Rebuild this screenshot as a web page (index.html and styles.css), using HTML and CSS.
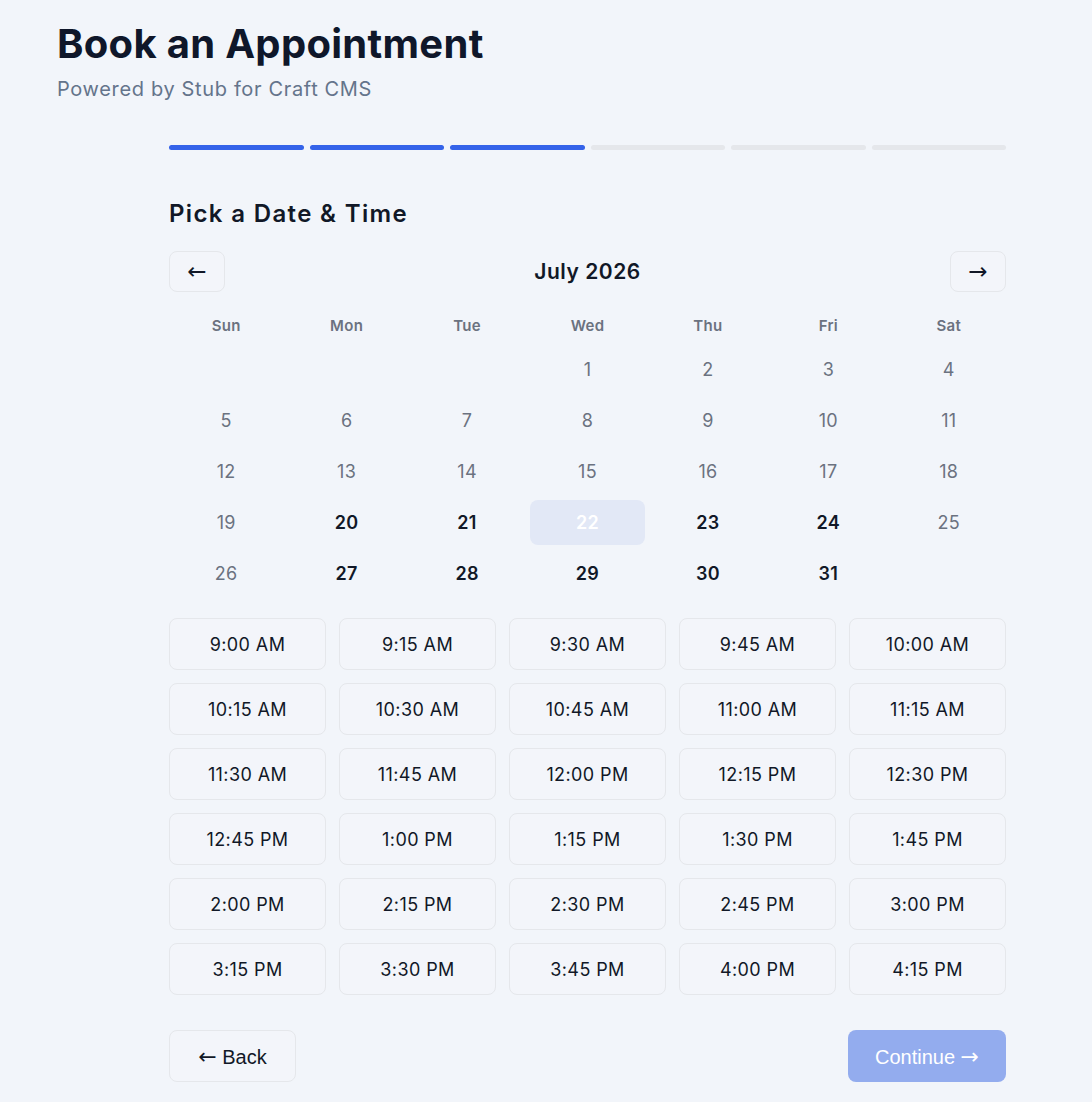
FILE: index.html
```html
<!DOCTYPE html>
<html>
<head>
<meta charset="utf-8">
<link rel="stylesheet" href="styles.css">
</head>
<body>
<div class="page">
  <header class="header">
    <h1 class="title">Book an Appointment</h1>
    <p class="subtitle">Powered by Stub for Craft CMS</p>
  </header>
  <main class="form">
    <div class="progress">
      <span class="seg on"></span><span class="seg on"></span><span class="seg on"></span>
      <span class="seg"></span><span class="seg"></span><span class="seg"></span>
    </div>
    <h2 class="step-title">Pick a Date &amp; Time</h2>
    <div class="cal-nav">
      <button class="nav-btn"><span class="arrow">&larr;</span></button>
      <div class="month">July 2026</div>
      <button class="nav-btn"><span class="arrow">&rarr;</span></button>
    </div>
    <div class="cal">
      <div class="dow">Sun</div><div class="dow">Mon</div><div class="dow">Tue</div><div class="dow">Wed</div><div class="dow">Thu</div><div class="dow">Fri</div><div class="dow">Sat</div>
      <div class="day"></div><div class="day"></div><div class="day"></div>
      <div class="day off">1</div><div class="day off">2</div><div class="day off">3</div><div class="day off">4</div>
      <div class="day off">5</div><div class="day off">6</div><div class="day off">7</div><div class="day off">8</div><div class="day off">9</div><div class="day off">10</div><div class="day off">11</div>
      <div class="day off">12</div><div class="day off">13</div><div class="day off">14</div><div class="day off">15</div><div class="day off">16</div><div class="day off">17</div><div class="day off">18</div>
      <div class="day off">19</div><div class="day on">20</div><div class="day on">21</div><div class="day sel">22</div><div class="day on">23</div><div class="day on">24</div><div class="day off">25</div>
      <div class="day off">26</div><div class="day on">27</div><div class="day on">28</div><div class="day on">29</div><div class="day on">30</div><div class="day on">31</div><div class="day"></div>
    </div>
    <div class="slots">
      <button class="slot">9:00 AM</button><button class="slot">9:15 AM</button><button class="slot">9:30 AM</button><button class="slot">9:45 AM</button><button class="slot">10:00 AM</button>
      <button class="slot">10:15 AM</button><button class="slot">10:30 AM</button><button class="slot">10:45 AM</button><button class="slot">11:00 AM</button><button class="slot">11:15 AM</button>
      <button class="slot">11:30 AM</button><button class="slot">11:45 AM</button><button class="slot">12:00 PM</button><button class="slot">12:15 PM</button><button class="slot">12:30 PM</button>
      <button class="slot">12:45 PM</button><button class="slot">1:00 PM</button><button class="slot">1:15 PM</button><button class="slot">1:30 PM</button><button class="slot">1:45 PM</button>
      <button class="slot">2:00 PM</button><button class="slot">2:15 PM</button><button class="slot">2:30 PM</button><button class="slot">2:45 PM</button><button class="slot">3:00 PM</button>
      <button class="slot">3:15 PM</button><button class="slot">3:30 PM</button><button class="slot">3:45 PM</button><button class="slot">4:00 PM</button><button class="slot">4:15 PM</button>
    </div>
    <div class="actions">
      <button class="back"><span class="btn-arrow">&larr;</span> Back</button>
      <button class="continue">Continue <span class="btn-arrow">&rarr;</span></button>
    </div>
  </main>
</div>
</body>
</html>
```
FILE: styles.css
```css
html, body {
  margin: 0;
  padding: 0;
  background: #f2f5fa;
}
body {
  font-family: Inter, "Noto Sans", sans-serif;
  color: #111827;
}
.page {
  padding: 20px 0 0 57px;
}
.header {
  margin: 0;
}
.title {
  margin: 0;
  font-size: 40px;
  line-height: 48px;
  font-weight: 700;
  color: #0f172a;
  letter-spacing: 0.3px;
}
.subtitle {
  margin: 7px 0 0;
  font-size: 20px;
  line-height: 28px;
  color: #64748b;
  letter-spacing: 0.65px;
}
.form {
  margin-left: 112px;
  width: 837px;
  padding-top: 42px;
}
.progress {
  display: flex;
  gap: 6px;
  height: 5px;
}
.seg {
  flex: 1;
  border-radius: 3px;
  background: #e5e7eb;
}
.seg.on {
  background: #3563e9;
}
.step-title {
  margin: 48px 0 0;
  font-size: 24px;
  line-height: 32px;
  font-weight: 600;
  color: #111827;
  letter-spacing: 1.35px;
}
.cal-nav {
  margin-top: 21px;
  display: flex;
  align-items: center;
  justify-content: space-between;
}
.nav-btn {
  width: 56px;
  height: 41px;
  border: 1px solid #e5e7eb;
  border-radius: 8px;
  background: #f3f5fa;
  color: #111827;
  padding: 0;
  display: flex;
  align-items: center;
  justify-content: center;
}
.arrow {
  font-family: "DejaVu Sans", sans-serif;
  font-size: 23px;
  line-height: 1;
}
.month {
  font-size: 21px;
  font-weight: 600;
  color: #111827;
  letter-spacing: 0.5px;
}
.cal {
  margin-top: 18px;
  display: grid;
  grid-template-columns: repeat(7, 1fr);
  grid-template-rows: 31px;
  grid-auto-rows: 45px;
  row-gap: 6px;
  column-gap: 6px;
}
.dow {
  display: flex;
  align-items: center;
  justify-content: center;
  font-size: 15px;
  font-weight: 600;
  color: #6b7280;
  letter-spacing: 0.3px;
}
.day {
  display: flex;
  align-items: center;
  justify-content: center;
  font-size: 18px;
  border-radius: 8px;
  letter-spacing: 0.3px;
}
.day.off {
  color: #6b7280;
}
.day.on {
  font-weight: 600;
  color: #111827;
}
.day.sel {
  background: #e2e8f6;
  color: #ffffff;
  font-weight: 600;
}
.slots {
  margin-top: 22px;
  display: grid;
  grid-template-columns: repeat(5, 1fr);
  column-gap: 13px;
  row-gap: 13px;
  grid-auto-rows: 52px;
}
.slot {
  border: 1.5px solid #e5e7eb;
  border-radius: 8px;
  background: #f3f5fa;
  font-family: Inter, "Noto Sans", sans-serif;
  font-size: 18px;
  letter-spacing: 0.4px;
  color: #111827;
  padding: 0;
}
.actions {
  margin-top: 35px;
  display: flex;
  justify-content: space-between;
}
.back, .continue {
  height: 52px;
  border-radius: 8px;
  font-family: "Liberation Sans", Arial, sans-serif;
  font-size: 20px;
  padding: 0;
}
.btn-arrow {
  font-family: "DejaVu Sans", sans-serif;
  font-size: 22px;
}
.back {
  width: 127px;
  border: 1.5px solid #e5e7eb;
  background: #f3f5fa;
  color: #111827;
}
.continue {
  width: 158px;
  border: none;
  background: #93acee;
  color: #ffffff;
}
```
